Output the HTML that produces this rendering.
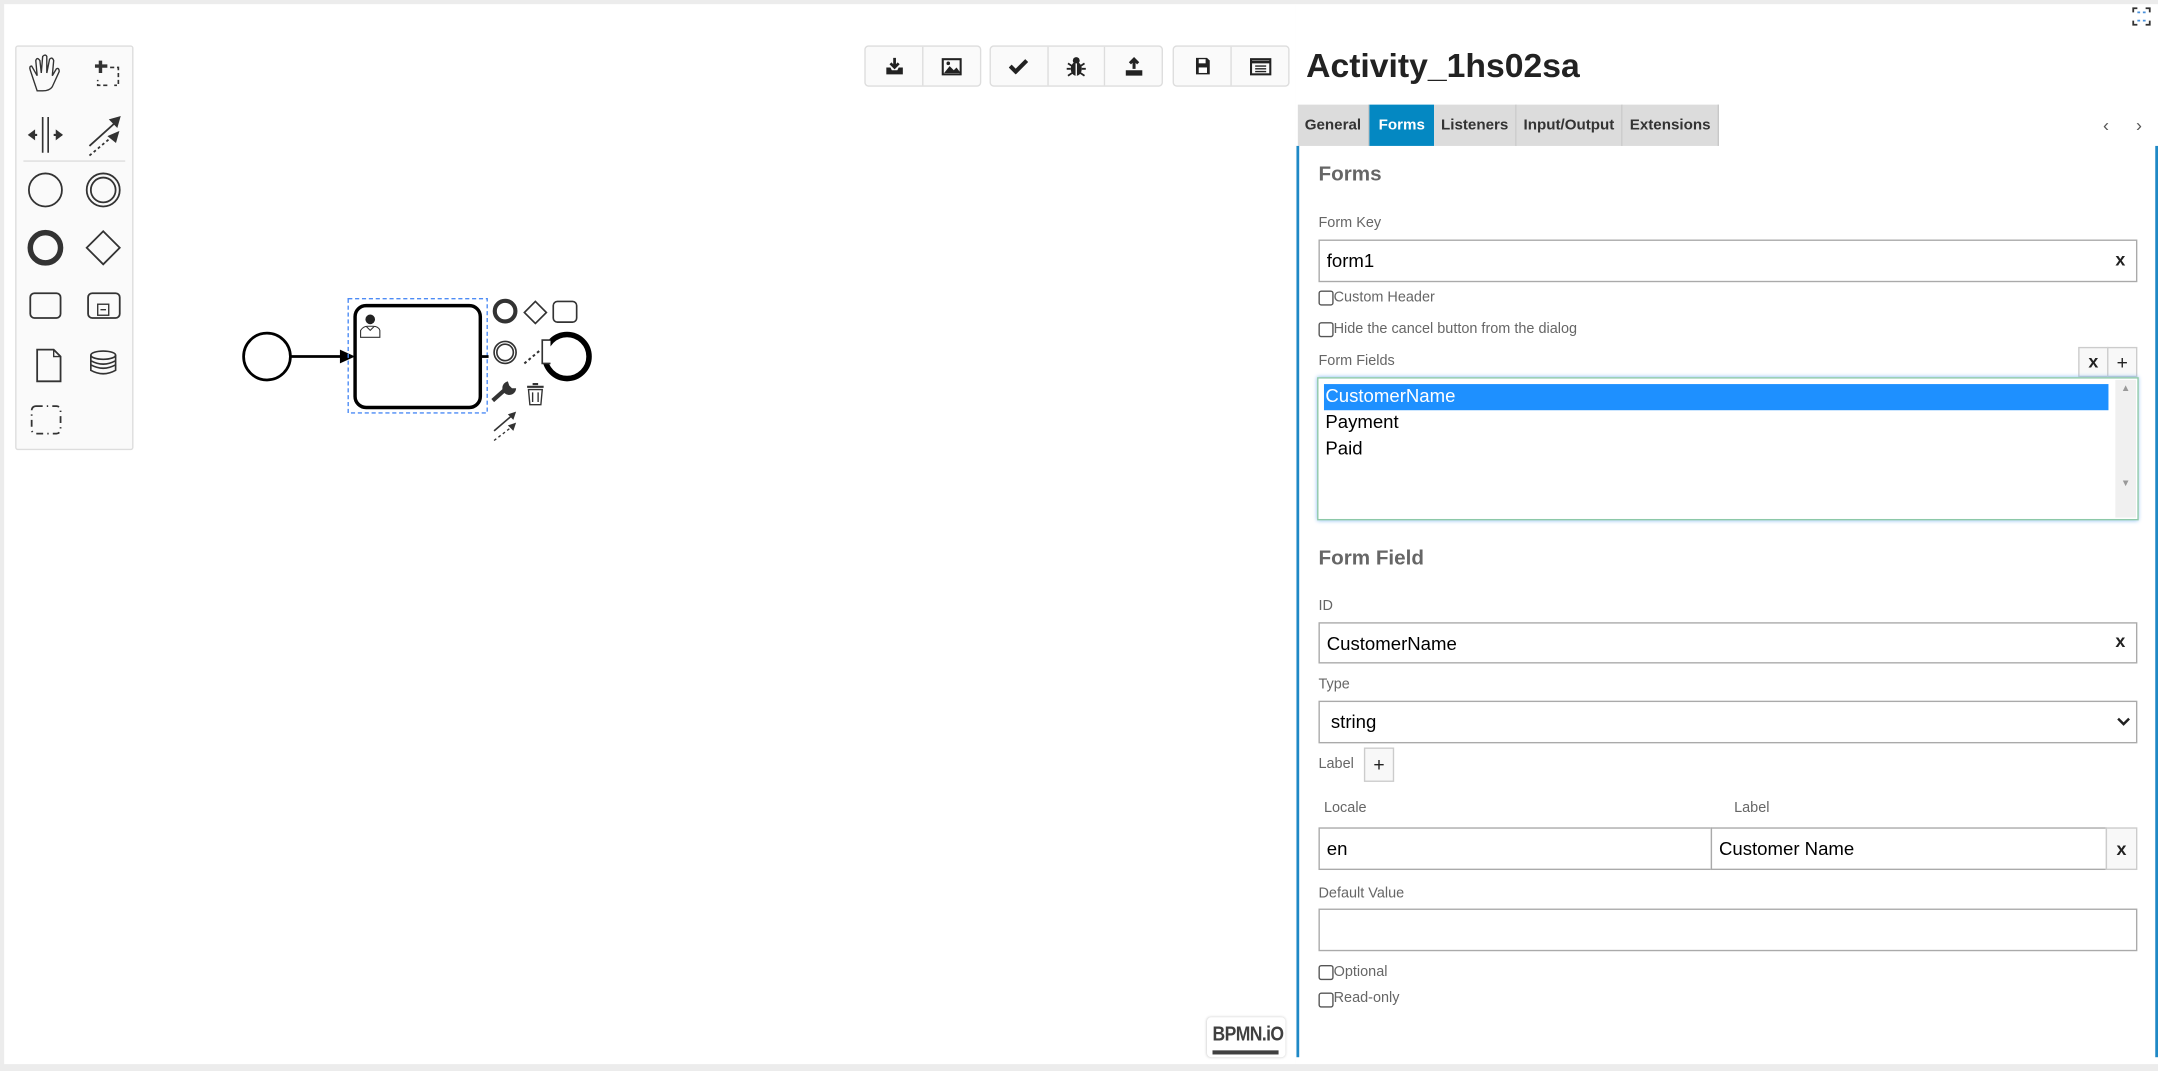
<!DOCTYPE html>
<html><head><meta charset="utf-8">
<style>
html,body{margin:0;padding:0;width:2158px;height:1071px;overflow:hidden;background:#fff;}
#s{position:absolute;left:0;top:0;width:1568px;height:778px;transform:scale(1.37628,1.3766);transform-origin:0 0;font-family:"Liberation Sans",sans-serif;background:#ececec;}
.a{position:absolute;}
#canvas{left:3px;top:3px;width:938px;height:770px;background:#fff;}
#panel{left:941px;top:3px;width:627px;height:770px;background:#fff;}
.pal{left:11px;top:33px;width:84px;height:292px;background:#fafafa;border:1px solid #ddd;border-radius:2px;}
.grp{top:33px;height:28px;background:#fafafa;border:1px solid #ddd;border-radius:3px;display:flex;}
.grp div{width:41px;height:28px;border-left:1px solid #ddd;display:flex;align-items:center;justify-content:center;}
.grp div:first-child{border-left:none;}
.tab{top:76px;height:30px;background:#dcdcdc;font-size:11px;font-weight:bold;color:#333;line-height:30px;text-align:center;border-right:1px solid #c8c8c8;box-sizing:border-box;}
.lbl{font-size:10.5px;color:#666;}
.h{font-size:15px;font-weight:bold;color:#666;}
.inp{border:1px solid #aaa;box-sizing:border-box;background:#fff;font-size:13.5px;color:#000;line-height:29px;padding-left:5px;}
.x{font-size:13px;font-weight:bold;color:#222;}
.cb{width:9px;height:9px;border:1px solid #555;border-radius:2px;background:#fff;}
.btn{border:1px solid #ccc;background:#f8f8f8;box-sizing:border-box;text-align:center;font-size:14px;color:#222;}
</style></head><body><div id="s">
<div class="a" id="canvas"></div>
<div class="a" id="panel"></div>

<div class="a pal"></div>
<svg class="a" style="left:11px;top:33px" width="86" height="294" viewBox="0 0 86 294" fill="none" stroke="#333">
<path d="M14 27 L11 18 Q10 15 12 15 L16 22 L15 11 Q16 8 18 11 L19 20 L20 8 Q22 6 23 8 L23 20 L25 10 Q27 8 28 11 L27 22 L30 17 Q32 16 32 19 L27 30 Q25 33 20 33 L16 33 Z" stroke-width="1"/>
<path d="M62 11v9M58 15h9" stroke-width="2.5"/><path d="M69 16h6v13h-3M67 29h-3M62 29h-2v-4" stroke-width="1.2" stroke-dasharray="3 2"/>
<path d="M20 52v26M24 52v26" stroke-width="1.2"/><path d="M10 65h6M28 65h6" stroke-width="1.5"/><path d="M10 65l4-3v6zM34 65l-4-3v6z" fill="#333"/>
<path d="M54 73l20-18" stroke-width="1.3"/><path d="M76 52l-7 2 5 5z" fill="#333"/><path d="M54 80l18-15" stroke-width="1.3" stroke-dasharray="2 2"/><path d="M75 63l-7 3 5 4z" fill="#333"/>
<path d="M6 84h74" stroke="#ddd"/>
<circle cx="22" cy="105" r="12" stroke-width="1.3"/>
<circle cx="64" cy="105" r="12" stroke-width="1.3"/><circle cx="64" cy="105" r="9" stroke-width="1.3"/>
<circle cx="22" cy="147" r="11" stroke-width="4"/>
<path d="M64 135l12 12-12 12-12-12z" stroke-width="1.3"/>
<rect x="11" y="180" width="22" height="18" rx="3" stroke-width="1.3"/>
<rect x="53" y="180" width="23" height="18" rx="3" stroke-width="1.3"/><rect x="60" y="188" width="8" height="8" stroke-width="1"/><path d="M62 192h4"/>
<path d="M16 221h12l5 5v18H16z" stroke-width="1.3"/><path d="M28 221v5h5" stroke-width="1"/>
<ellipse cx="64" cy="225" rx="9" ry="3" stroke-width="1.2"/><path d="M55 225v11q9 5 18 0V225M55 229q9 5 18 0M55 232q9 5 18 0" stroke-width="1.2"/>
<rect x="12" y="262" width="21" height="20" rx="3" stroke-width="1.3" stroke-dasharray="5 3 1 3"/>
</svg>

<div class="a grp" style="left:628px;width:83px"><div><svg width="14" height="14"><path d="M7 1v7M4 5l3 3 3-3" stroke="#222" stroke-width="2" fill="none"/><path d="M1 8v5h12V8h-3l-1 2H5L4 8z" fill="#222"/></svg></div><div><svg width="15" height="13"><rect x="1" y="1" width="13" height="11" fill="none" stroke="#222" stroke-width="1.5"/><path d="M2 11l4-5 3 3 2-2 3 4z" fill="#222"/><circle cx="5" cy="4" r="1.3" fill="#222"/></svg></div></div>
<div class="a grp" style="left:719px;width:124px"><div><svg width="14" height="12"><path d="M1 6l4 4 8-8" stroke="#222" stroke-width="3" fill="none"/></svg></div><div><svg width="14" height="15"><ellipse cx="7" cy="9" rx="4" ry="5" fill="#222"/><circle cx="7" cy="3" r="2.5" fill="#222"/><path d="M1 5l3 2M13 5l-3 2M0 9h3M11 9h3M1 14l3-2M13 14l-3-2" stroke="#222" stroke-width="1.3"/><path d="M7 5v9" stroke="#fff"/></svg></div><div><svg width="14" height="14"><path d="M7 9V2M4 5l3-3 3 3" stroke="#222" stroke-width="2.2" fill="none"/><path d="M1 10h12v4H1z" fill="#222"/></svg></div></div>
<div class="a grp" style="left:852px;width:83px"><div><svg width="12" height="14"><path d="M1 1h8l2 2v10H1z" fill="#222"/><rect x="3" y="2" width="5" height="3" fill="#fff"/><rect x="3" y="8" width="6" height="4" fill="#fff"/></svg></div><div><svg width="16" height="13"><rect x="1" y="1" width="14" height="11" fill="none" stroke="#222" stroke-width="1.5"/><path d="M1 3h14" stroke="#222" stroke-width="2"/><path d="M4 6h8M4 8h8M4 10h8" stroke="#222"/></svg></div></div>

<svg class="a" style="left:0;top:0" width="941" height="778" fill="none">
<circle cx="194" cy="259" r="17" stroke="#000" stroke-width="2"/>
<path d="M211 259h37" stroke="#000" stroke-width="2"/><path d="M258 259l-11-5v10z" fill="#000"/>
<rect x="253" y="217" width="101" height="83" stroke="#4c8bf5" stroke-dasharray="3 2"/>
<rect x="258" y="222" width="91" height="74" rx="8" stroke="#000" stroke-width="2.5" fill="#fff"/>
<circle cx="269" cy="232" r="3.5" fill="#222"/><path d="M262 245v-5q2-3 5-3h4q4 0 5 3v5z M266 237l3 3 3-3" stroke="#333" stroke-width="0.8"/>
<path d="M349 259h6" stroke="#000" stroke-width="2"/>
<circle cx="367" cy="226" r="7.5" stroke="#333" stroke-width="3"/>
<path d="M389 219l8 8-8 8-8-8z" stroke="#333" stroke-width="1.2"/>
<rect x="402" y="219" width="17" height="15" rx="3" stroke="#333" stroke-width="1.2"/>
<circle cx="367" cy="256" r="8" stroke="#333" stroke-width="1.2"/><circle cx="367" cy="256" r="6" stroke="#333" stroke-width="1.2"/>
<path d="M381 264l12-10" stroke="#333" stroke-width="1.5" stroke-dasharray="2 2"/>
<circle cx="412" cy="259" r="16" stroke="#000" stroke-width="4"/>
<path d="M400 247h-6v17h6" stroke="#333" stroke-width="1.2" fill="#fff"/>
<path d="M358 291l9-8" stroke="#333" stroke-width="3"/><path d="M369 277a5 5 0 1 0 6 5l-3 0-2-2z" fill="#333"/>
<path d="M383 281h12M387 279h4" stroke="#333" stroke-width="1.5"/><path d="M384 283l1 11h8l1-11zM387 285v7M391 285v7" stroke="#333" stroke-width="1"/>
<path d="M359 313l14-12" stroke="#333" stroke-width="1.2"/><path d="M375 299l-6 2 4 4z" fill="#333"/><path d="M359 320l13-10" stroke="#333" stroke-dasharray="2 2"/><path d="M375 307l-6 2 4 4z" fill="#333"/>
</svg>

<div class="a" style="left:877px;top:739px;width:57px;height:29px;background:#fff;border-radius:3px;box-shadow:0 0 2px #ccc"></div>
<div class="a" style="left:881px;top:743px;font-size:15px;font-weight:bold;color:#404040;letter-spacing:-0.5px;transform:scaleX(0.85);transform-origin:0 0">BPMN.iO</div>
<div class="a" style="left:881px;top:763px;width:48px;height:3px;background:#404040"></div>

<svg class="a" style="left:1549px;top:5px" width="14" height="14" fill="none" stroke="#333" stroke-width="1.3"><path d="M1 4V1h3M10 1h3v3M13 10v3h-3M4 13H1v-3"/><path d="M4 4h2M8 4h2M4 10h2M8 10h2" stroke="#4a90d9"/></svg>

<div class="a" style="left:949px;top:35px;font-size:24.5px;font-weight:bold;color:#222">Activity_1hs02sa</div>
<div class="a tab" style="left:943px;width:52px">General</div>
<div class="a tab" style="left:995px;width:47px;background:#0488c2;color:#fff;border-right:none">Forms</div>
<div class="a tab" style="left:1042px;width:60px">Listeners</div>
<div class="a tab" style="left:1102px;width:77px">Input/Output</div>
<div class="a tab" style="left:1179px;width:70px">Extensions</div>
<div class="a" style="left:1528px;top:83px;font-size:13px;color:#555">‹</div>
<div class="a" style="left:1552px;top:83px;font-size:13px;color:#555">›</div>
<div class="a" style="left:942px;top:106px;width:2px;height:662px;background:#1f89c6"></div>
<div class="a" style="left:1566px;top:106px;width:2px;height:662px;background:#1f89c6"></div>

<div class="a h" style="left:958px;top:118px">Forms</div>
<div class="a lbl" style="left:958px;top:156px">Form Key</div>
<div class="a inp" style="left:958px;top:174px;width:595px;height:31px">form1</div>
<div class="a x" style="left:1537px;top:181px">x</div>
<div class="a cb" style="left:958px;top:211px"></div><div class="a lbl" style="left:969px;top:210px">Custom Header</div>
<div class="a cb" style="left:958px;top:234px"></div><div class="a lbl" style="left:969px;top:233px">Hide the cancel button from the dialog</div>
<div class="a lbl" style="left:958px;top:256px">Form Fields</div>
<div class="a btn" style="left:1510px;top:252px;width:22px;height:22px;line-height:20px;font-weight:bold;font-size:13px">x</div>
<div class="a btn" style="left:1531px;top:252px;width:22px;height:22px;line-height:20px">+</div>
<div class="a" style="left:957px;top:274px;width:597px;height:104px;border:1px solid #8cc8a8;box-shadow:0 0 3px #80b8f0;box-sizing:border-box;background:#fff"></div>
<div class="a" style="left:1537px;top:276px;width:15px;height:100px;background:#f0f0f0"></div>
<div class="a" style="left:1541px;top:279px;font-size:7px;color:#999">▲</div>
<div class="a" style="left:1541px;top:348px;font-size:7px;color:#999">▼</div>
<div class="a" style="left:962px;top:279px;width:570px;height:19px;background:#1e90ff"></div>
<div class="a" style="left:963px;top:278px;font-size:13.5px;color:#fff;line-height:19px">CustomerName</div>
<div class="a" style="left:963px;top:297px;font-size:13.5px;line-height:19px">Payment</div>
<div class="a" style="left:963px;top:316px;font-size:13.5px;line-height:19px">Paid</div>

<div class="a h" style="left:958px;top:397px">Form Field</div>
<div class="a lbl" style="left:958px;top:434px">ID</div>
<div class="a inp" style="left:958px;top:452px;width:595px;height:30px">CustomerName</div>
<div class="a x" style="left:1537px;top:458px">x</div>
<div class="a lbl" style="left:958px;top:491px">Type</div>
<div class="a inp" style="left:958px;top:509px;width:595px;height:31px;padding-left:8px">string</div>
<svg class="a" style="left:1538px;top:520px" width="10" height="8"><path d="M1 2l4 4 4-4" stroke="#222" stroke-width="1.8" fill="none"/></svg>
<div class="a lbl" style="left:958px;top:549px">Label</div>
<div class="a btn" style="left:991px;top:543px;width:22px;height:25px;line-height:23px">+</div>
<div class="a lbl" style="left:962px;top:581px">Locale</div>
<div class="a lbl" style="left:1260px;top:581px">Label</div>
<div class="a inp" style="left:958px;top:601px;width:286px;height:31px">en</div>
<div class="a inp" style="left:1243px;top:601px;width:288px;height:31px">Customer Name</div>
<div class="a btn" style="left:1530px;top:601px;width:23px;height:31px;line-height:29px;font-weight:bold;font-size:13px">x</div>
<div class="a lbl" style="left:958px;top:643px">Default Value</div>
<div class="a inp" style="left:958px;top:660px;width:595px;height:31px"></div>
<div class="a cb" style="left:958px;top:701px"></div><div class="a lbl" style="left:969px;top:700px">Optional</div>
<div class="a cb" style="left:958px;top:721px"></div><div class="a lbl" style="left:969px;top:719px">Read-only</div>
</div></body></html>
